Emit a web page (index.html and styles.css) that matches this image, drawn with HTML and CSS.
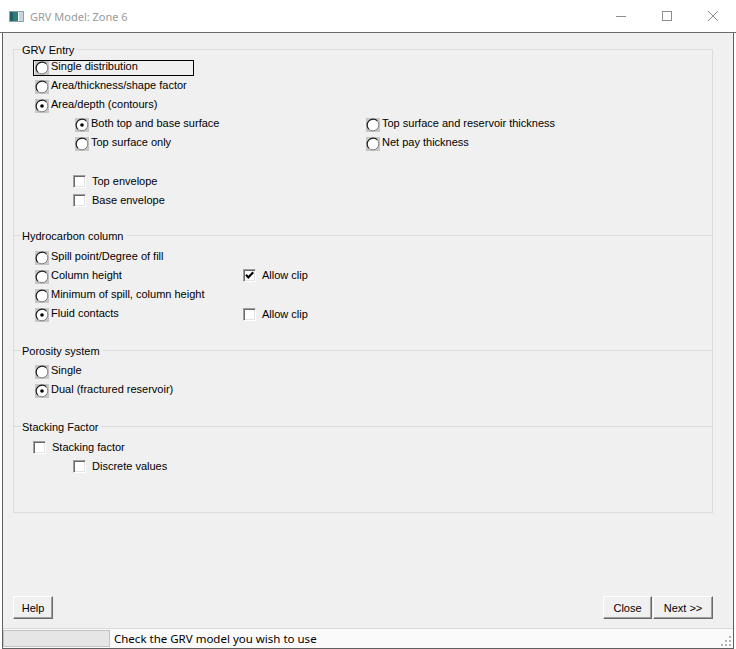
FILE: index.html
```html
<!DOCTYPE html>
<html>
<head>
<meta charset="utf-8">
<title>GRV Model: Zone 6</title>
<link rel="stylesheet" href="styles.css">
</head>
<body>
<svg class="defs" width="0" height="0">
  <symbol id="rb" viewBox="0 0 14 14">
    <rect width="14" height="14" fill="#c6c6c6"/>
    <circle cx="7" cy="7" r="6" fill="#fff"/>
    <path d="M2.76 11.24A6 6 0 0 1 11.24 2.76" fill="none" stroke="#1a1a1a" stroke-width="1.2"/>
    <path d="M11.24 2.76A6 6 0 0 1 2.76 11.24" fill="none" stroke="#808080" stroke-width="1"/>
  </symbol>
  <symbol id="rbon" viewBox="0 0 14 14">
    <rect width="14" height="14" fill="#c6c6c6"/>
    <circle cx="7" cy="7" r="6" fill="#fff"/>
    <path d="M2.76 11.24A6 6 0 0 1 11.24 2.76" fill="none" stroke="#1a1a1a" stroke-width="1.2"/>
    <path d="M11.24 2.76A6 6 0 0 1 2.76 11.24" fill="none" stroke="#808080" stroke-width="1"/>
    <circle cx="7" cy="7" r="1.8" fill="#000"/>
  </symbol>
</svg>
<div class="window">
  <div class="titlebar">
    <svg class="appicon" width="15" height="11" viewBox="0 0 15 11">
      <rect width="15" height="11" fill="#8aa4ad"/>
      <rect x="1" y="1" width="8" height="9" fill="#2e7c78"/>
      <rect x="1" y="1" width="3" height="9" fill="#1f5f66"/>
      <rect x="9" y="1" width="1" height="9" fill="#ffffff"/>
      <rect x="10" y="1" width="4" height="9" fill="#c8d6db"/>
    </svg>
    <span class="title">GRV Model: Zone 6</span>
    <div class="controls">
      <span class="ctl"><svg width="10" height="10" viewBox="0 0 10 10"><path d="M0 5.5H10" stroke="#8c8c8c" stroke-width="1"/></svg></span>
      <span class="ctl"><svg width="10" height="10" viewBox="0 0 10 10"><rect x="0.5" y="0.5" width="9" height="9" fill="none" stroke="#8c8c8c" stroke-width="1"/></svg></span>
      <span class="ctl"><svg width="10" height="10" viewBox="0 0 10 10"><path d="M0 0L10 10M10 0L0 10" stroke="#8c8c8c" stroke-width="1"/></svg></span>
    </div>
  </div>
  <div class="frame">
    <div class="main">
      <div class="group">
        <div class="legend first"><span>GRV Entry</span></div>
        <div class="opts">
          <div class="row"><label class="radio l1 focus"><svg class="rd"><use href="#rb"/></svg><span class="txt">Single distribution</span></label></div>
          <div class="row"><label class="radio l1"><svg class="rd"><use href="#rb"/></svg><span class="txt">Area/thickness/shape factor</span></label></div>
          <div class="row"><label class="radio l1"><svg class="rd"><use href="#rbon"/></svg><span class="txt">Area/depth (contours)</span></label></div>
          <div class="row cols-wide">
            <label class="radio l2"><svg class="rd"><use href="#rbon"/></svg><span class="txt">Both top and base surface</span></label>
            <label class="radio"><svg class="rd"><use href="#rb"/></svg><span class="txt">Top surface and reservoir thickness</span></label>
          </div>
          <div class="row cols-wide">
            <label class="radio l2"><svg class="rd"><use href="#rb"/></svg><span class="txt">Top surface only</span></label>
            <label class="radio"><svg class="rd"><use href="#rb"/></svg><span class="txt">Net pay thickness</span></label>
          </div>
          <div class="row spaced"><label class="check l2"><span class="box"></span><span class="txt">Top envelope</span></label></div>
          <div class="row"><label class="check l2"><span class="box"></span><span class="txt">Base envelope</span></label></div>
        </div>

        <div class="legend"><span>Hydrocarbon column</span></div>
        <div class="opts pad4">
          <div class="row"><label class="radio l1"><svg class="rd"><use href="#rb"/></svg><span class="txt">Spill point/Degree of fill</span></label></div>
          <div class="row cols-narrow">
            <label class="radio l1"><svg class="rd"><use href="#rb"/></svg><span class="txt">Column height</span></label>
            <label class="check"><span class="box"><svg width="11" height="11" viewBox="0 0 11 11"><polyline points="2,4.8 4.3,7.4 9.2,2.2" fill="none" stroke="#000" stroke-width="2.1"/></svg></span><span class="txt">Allow clip</span></label>
          </div>
          <div class="row"><label class="radio l1"><svg class="rd"><use href="#rb"/></svg><span class="txt">Minimum of spill, column height</span></label></div>
          <div class="row cols-narrow">
            <label class="radio l1"><svg class="rd"><use href="#rbon"/></svg><span class="txt">Fluid contacts</span></label>
            <label class="check low"><span class="box"></span><span class="txt">Allow clip</span></label>
          </div>
        </div>

        <div class="legend wide"><span>Porosity system</span></div>
        <div class="opts pad3">
          <div class="row"><label class="radio l1"><svg class="rd"><use href="#rb"/></svg><span class="txt">Single</span></label></div>
          <div class="row"><label class="radio l1"><svg class="rd"><use href="#rbon"/></svg><span class="txt">Dual (fractured reservoir)</span></label></div>
        </div>

        <div class="legend wide"><span>Stacking Factor</span></div>
        <div class="opts pad4">
          <div class="row"><label class="check l1"><span class="box"></span><span class="txt">Stacking factor</span></label></div>
          <div class="row"><label class="check l2"><span class="box"></span><span class="txt">Discrete values</span></label></div>
        </div>
      </div>
      <div class="buttons">
        <button class="btn help">Help</button>
        <button class="btn close">Close</button>
        <button class="btn next">Next &gt;&gt;</button>
      </div>
    </div>
    <div class="statusbar">
      <span class="pane"></span>
      <span class="status">Check the GRV model you wish to use</span>
      <svg class="grip" width="11" height="11" viewBox="0 0 11 11">
        <g fill="#b4b4b4">
          <rect x="8" y="0" width="2" height="2"/>
          <rect x="8" y="4" width="2" height="2"/>
          <rect x="4" y="4" width="2" height="2"/>
          <rect x="8" y="8" width="2" height="2"/>
          <rect x="4" y="8" width="2" height="2"/>
          <rect x="0" y="8" width="2" height="2"/>
        </g>
      </svg>
    </div>
  </div>
</div>
</body>
</html>
```
FILE: styles.css
```css
* { box-sizing: border-box; }
html, body { margin: 0; padding: 0; }
body {
  width: 736px;
  height: 649px;
  overflow: hidden;
  background: #ffffff;
  font-family: "Liberation Sans", Arial, sans-serif;
  font-size: 11px;
  color: #000;
}
.defs { position: absolute; width: 0; height: 0; overflow: hidden; }

.window { width: 736px; height: 649px; display: flex; flex-direction: column; }

.titlebar {
  height: 33px;
  flex: none;
  background: #fff;
  border-bottom: 1px solid #6b6b6b;
  display: flex;
  align-items: center;
}
.appicon { margin-left: 9px; flex: none; margin-top: 1px; }
.title {
  margin-left: 6px;
  font-family: "Noto Sans", "Liberation Sans", sans-serif;
  font-size: 11px;
  color: #9a9a9a;
}
.controls { margin-left: auto; display: flex; height: 32px; }
.ctl { width: 46px; height: 32px; display: flex; align-items: center; justify-content: center; }

.frame {
  flex: 1;
  margin: 0 2px;
  border-left: 1px solid #5f5f5f;
  border-right: 1px solid #5f5f5f;
  border-bottom: 1px solid #5f5f5f;
  background: #f0f0f0;
  display: flex;
  flex-direction: column;
}
.main {
  height: 595px;
  flex: none;
  display: flex;
  flex-direction: column;
  padding: 16px 20px 9px 10px;
}
.group {
  height: 464px;
  flex: none;
  border: 1px solid #dcdcdc;
  border-top: none;
}

.legend {
  display: flex;
  align-items: flex-start;
  height: 13px;
  line-height: 12px;
  margin-top: 20px;
}
.legend.first { margin-top: -5px; }
.legend.wide { margin-top: 22px; }
.legend::before,
.legend::after {
  content: "";
  border-top: 1px solid #dcdcdc;
  margin-top: 5px;
}
.legend::before { width: 7px; flex: none; }
.legend::after { flex: 1; }
.legend span { padding: 0 3px 0 1px; }

.opts.pad4 { padding-top: 4px; }
.opts.pad3 { padding-top: 3px; }

.row { height: 19px; display: flex; align-items: flex-start; }
.row.spaced { margin-top: 20px; }
.row.cols-wide { display: grid; grid-template-columns: 350px auto; align-items: start; }
.row.cols-narrow { display: grid; grid-template-columns: 229px auto; align-items: start; }
.row > * { justify-self: start; }

.radio {
  display: inline-flex;
  align-items: flex-start;
  margin-top: 3px;
  height: 16px;
  border: 1px solid transparent;
  padding-left: 1px;
  white-space: nowrap;
}
.radio.focus { border-color: #000; width: 161px; }
.rd { width: 14px; height: 14px; flex: none; }
.radio .txt { margin-left: 2px; line-height: 11px; }

.check {
  display: inline-flex;
  align-items: flex-start;
  margin-top: 3px;
  white-space: nowrap;
}
.check.low { margin-top: 4px; }
.box {
  width: 13px;
  height: 13px;
  flex: none;
  background: #fff;
  border-top: 1px solid #a0a0a0;
  border-left: 1px solid #a0a0a0;
  border-right: 1px solid #ffffff;
  border-bottom: 1px solid #ffffff;
  box-shadow: inset 1px 1px 0 #696969, inset -1px -1px 0 #e3e3e3;
  display: flex;
}
.check .txt { margin-left: 6px; margin-top: 1px; line-height: 11px; }

.l1 { margin-left: 19px; }
.l2 { margin-left: 59px; }

.buttons { margin-top: auto; display: flex; height: 23px; }
.btn {
  height: 23px;
  padding: 0;
  margin: 0;
  background: #f0f0f0;
  border-top: 1px solid #ffffff;
  border-left: 1px solid #ffffff;
  border-right: 1px solid #696969;
  border-bottom: 1px solid #696969;
  box-shadow: inset -1px -1px 0 #a0a0a0;
  font-family: "Liberation Sans", Arial, sans-serif;
  font-size: 11px;
  color: #000;
  display: flex;
  align-items: center;
  justify-content: center;
}
.btn.help { width: 40px; }
.btn.close { width: 49px; margin-left: auto; }
.btn.next { width: 60px; margin-left: 1px; }

.statusbar {
  flex: 1;
  border-top: 1px solid #d9d9d9;
  background: #fafafa;
  display: flex;
  align-items: center;
}
.pane {
  width: 107px;
  height: 17px;
  flex: none;
  background: #e6e6e6;
  border: 1px solid #c2c2c2;
}
.status {
  margin-left: 4px;
  font-family: "Noto Sans", "Liberation Sans", sans-serif;
  font-size: 11.5px;
  color: #000;
  white-space: nowrap;
}
.grip { margin-left: auto; margin-right: 1px; align-self: flex-end; margin-bottom: 1px; }
```
